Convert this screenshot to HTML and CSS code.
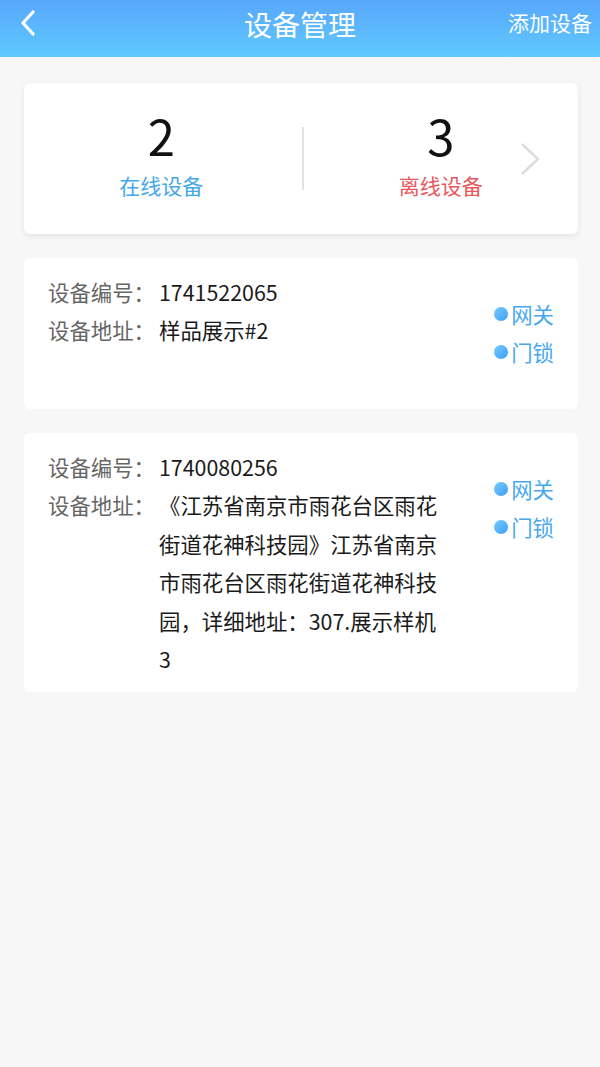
FILE: index.html
```html
<!DOCTYPE html>
<html lang="zh-CN">
<head>
    <meta charset="UTF-8">
    <meta name="viewport" content="width=device-width, initial-scale=1.0">
    <title>设备管理</title>
    <link rel="stylesheet" href="styles.css">
</head>
<body>
    <div class="header">
        <span class="back">
            <svg width="20" height="26" viewBox="0 0 20 26"><path d="M14 2 L4 13 L14 24" fill="none" stroke="#fff" stroke-width="3.2" stroke-linecap="round" stroke-linejoin="round"/></svg>
        </span>
        <h1 class="title">设备管理</h1>
        <span class="add">添加设备</span>
    </div>

    <div class="main">
        <div class="summary">
            <div class="stat">
                <div class="num">2</div>
                <div class="stat-label online">在线设备</div>
            </div>
            <div class="divider"></div>
            <div class="stat">
                <div class="num">3</div>
                <div class="stat-label offline">离线设备</div>
            </div>
            <span class="more">
                <svg width="20" height="32" viewBox="0 0 20 32"><path d="M2 1 L18 16 L2 31" fill="none" stroke="#dcdcdc" stroke-width="2.4"/></svg>
            </span>
        </div>

        <div class="device">
            <div class="info">
                <div class="row">
                    <span class="label">设备编号：</span>
                    <span class="value">1741522065</span>
                </div>
                <div class="row">
                    <span class="label">设备地址：</span>
                    <span class="value">样品展示#2</span>
                </div>
            </div>
            <div class="tags">
                <div class="tag"><i class="dot"></i>网关</div>
                <div class="tag"><i class="dot"></i>门锁</div>
            </div>
        </div>

        <div class="device">
            <div class="info">
                <div class="row">
                    <span class="label">设备编号：</span>
                    <span class="value">1740080256</span>
                </div>
                <div class="row">
                    <span class="label">设备地址：</span>
                    <span class="value">《江苏省南京市雨花台区雨花街道花神科技园》江苏省南京市雨花台区雨花街道花神科技园，详细地址：307.展示样机3</span>
                </div>
            </div>
            <div class="tags">
                <div class="tag"><i class="dot"></i>网关</div>
                <div class="tag"><i class="dot"></i>门锁</div>
            </div>
        </div>
    </div>
</body>
</html>
```

FILE: styles.css
```css
* {
    box-sizing: border-box;
}
body {
    margin: 0;
    background: #f7f7f7;
    font-family: "Noto Sans CJK SC", "Noto Sans", sans-serif;
    color: #222;
}
.header {
    position: relative;
    height: 57px;
    background: linear-gradient(180deg, #58a7fb 0%, #5fc9fe 100%);
    display: flex;
    align-items: center;
    justify-content: center;
}
.back {
    position: absolute;
    left: 19px;
    top: 10px;
}
.title {
    margin: 0;
    font-size: 28px;
    font-weight: normal;
    color: #fff;
    line-height: 1;
    margin-top: -10px;
}
.add {
    position: absolute;
    right: 8px;
    top: 8px;
    font-size: 21px;
    color: #fff;
    line-height: 28px;
}
.main {
    padding: 26px 22px 0 24px;
}
.summary {
    position: relative;
    display: flex;
    align-items: center;
    height: 151px;
    padding-bottom: 10px;
    background: #fff;
    border-radius: 6px;
    box-shadow: 0 2px 6px rgba(0,0,0,0.08);
}
.stat {
    flex: 1;
    text-align: center;
}
.num {
    font-size: 49px;
    line-height: 52px;
    color: #111;
}
.stat-label {
    font-size: 21px;
    line-height: 28px;
    margin-top: 10px;
}
.online {
    color: #45a7ec;
}
.offline {
    color: #e8575b;
}
.divider {
    width: 2px;
    height: 63px;
    margin-left: 3px;
    margin-top: 10px;
    background: #e2e2e2;
}
.more {
    position: absolute;
    right: 38px;
    top: 60px;
}
.device {
    display: flex;
    min-height: 151px;
    margin-top: 24px;
    padding: 15px 24px 14px 24px;
    background: #fff;
    border-radius: 6px;
}
.info {
    width: 396px;
}
.row {
    display: flex;
    font-size: 21.4px;
    line-height: 38.4px;
}
.label {
    flex: none;
    width: 111px;
    color: #666;
}
.value {
    flex: 1;
    color: #1a1a1a;
}
.tags {
    margin-left: auto;
    padding-top: 22px;
}
.tag {
    display: flex;
    align-items: center;
    font-size: 21.4px;
    line-height: 38px;
    color: #47a8f0;
}
.dot {
    width: 14px;
    height: 14px;
    margin-right: 3px;
    border-radius: 50%;
    background: linear-gradient(135deg, #79cbff 0%, #3b9ef7 100%);
}
```
